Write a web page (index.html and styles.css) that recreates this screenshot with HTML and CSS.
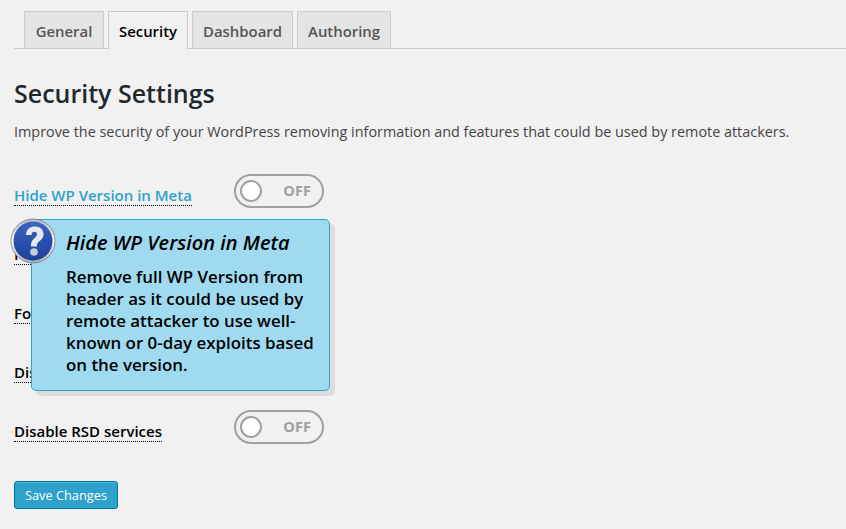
FILE: index.html
```html
<!DOCTYPE html>
<html lang="en">
<head>
<meta charset="utf-8">
<title>Security Settings</title>
<link rel="stylesheet" href="styles.css">
</head>
<body>
<nav class="tabs">
  <a class="tab">General</a>
  <a class="tab active">Security</a>
  <a class="tab">Dashboard</a>
  <a class="tab">Authoring</a>
</nav>
<h2 class="title">Security Settings</h2>
<p class="intro">Improve the security of your WordPress removing information and features that could be used by remote attackers.</p>
<div class="rows">
  <div class="row">
    <span class="label hover">Hide WP Version in Meta</span>
    <span class="switch"><i class="knob"></i><b class="off">OFF</b></span>
  </div>
  <div class="row">
    <span class="label">Hide Login Errors</span>
    <span class="switch"><i class="knob"></i><b class="off">OFF</b></span>
  </div>
  <div class="row">
    <span class="label">Force SSL</span>
    <span class="switch"><i class="knob"></i><b class="off">OFF</b></span>
  </div>
  <div class="row">
    <span class="label">Disable XML</span>
    <span class="switch"><i class="knob"></i><b class="off">OFF</b></span>
  </div>
  <div class="row">
    <span class="label">Disable RSD services</span>
    <span class="switch"><i class="knob"></i><b class="off">OFF</b></span>
  </div>
</div>
<button class="save">Save Changes</button>
<div class="tooltip">
  <h4 class="tip-title">Hide WP Version in Meta</h4>
  <p class="tip-text">Remove full WP Version from header as it could be used by remote attacker to use well-known or 0-day exploits based on the version.</p>
</div>
<svg class="help" width="46" height="46" viewBox="0 0 46 46">
  <defs>
    <linearGradient id="ring" x1="0" y1="0" x2="0" y2="1">
      <stop offset="0" stop-color="#b9bcc2"/>
      <stop offset="0.5" stop-color="#ffffff"/>
      <stop offset="1" stop-color="#a9acb2"/>
    </linearGradient>
    <linearGradient id="ball" x1="0" y1="0" x2="0" y2="1">
      <stop offset="0" stop-color="#3a66c4"/>
      <stop offset="0.55" stop-color="#2a4fa8"/>
      <stop offset="1" stop-color="#16307e"/>
    </linearGradient>
  </defs>
  <circle cx="23" cy="23" r="22" fill="url(#ring)" stroke="#777b84" stroke-width="0.8"/>
  <circle cx="23" cy="23" r="19.5" fill="url(#ball)"/>
  <path d="M4 28 C12 19 28 24 42 19 A19.5 19.5 0 0 1 8 35 Z" fill="#2450b0" opacity="0.6"/>
  <path d="M16 17 C16 11 20.500 8.500 25 8.500 C30.500 8.500 33.500 12 33.500 16 C33.500 20 31 22 28.500 24 C27 25.200 27 26.500 27 28.500 L21 28.500 C21 25 21.300 23 23.800 20.800 C25.800 19 27 18 27 16.300 C27 14.600 25.800 13.800 24.300 13.800 C22.500 13.800 21.800 15 21.600 17 Z" fill="#e6e8ef"/>
  <circle cx="24" cy="34" r="3.800" fill="#c9cdd8"/>
</svg>
</body>
</html>
```
FILE: styles.css
```css
* { box-sizing: border-box; }
html, body { height: 100%; }
body {
  margin: 0;
  padding: 11px 0 0 14px;
  background: #f1f1f1;
  color: #222;
  font-family: "Open Sans", sans-serif;
  font-size: 14px;
  overflow: hidden;
  position: relative;
}
.tabs {
  display: flex;
  gap: 4px;
  padding-left: 10px;
  height: 38px;
  border-bottom: 1px solid #ccc;
}
.tab {
  height: 37px;
  min-width: 80px;
  padding: 0 10px;
  background: #e4e4e4;
  border: 1px solid #ccc;
  border-bottom: none;
  color: #555;
  font-size: 14.9px;
  font-weight: 600;
  line-height: 38px;
  text-align: center;
}
.tab.active {
  height: 38px;
  background: #f1f1f1;
  color: #000;
}
.title {
  margin: 27px 0 0;
  font-size: 25px;
  font-weight: 600;
  line-height: 35px;
  color: #23282d;
  height: 35px;
}
.intro {
  margin: 10px 0 0;
  font-size: 14.4px;
  line-height: 21px;
  color: #444;
}
.rows {
  margin-top: 32px;
  display: flex;
  flex-direction: column;
  gap: 25px;
}
.row {
  display: grid;
  grid-template-columns: 220px 90px;
  height: 34px;
}
.label {
  justify-self: start;
  align-self: start;
  margin-top: 11px;
  height: 21px;
  color: #000;
  font-size: 15px;
  font-weight: 600;
  line-height: 20px;
  white-space: nowrap;
  border-bottom: 1px dotted #000;
}
.label.hover { color: #2ea2cc; }
.switch {
  height: 34px;
  border: 2px solid #a0a0a0;
  border-radius: 17px;
  background: #f1f1f1;
  display: flex;
  align-items: center;
  justify-content: space-between;
  padding: 0 11px 0 4px;
}
.knob {
  width: 22px;
  height: 22px;
  border: 2px solid #a0a0a0;
  border-radius: 50%;
  background: #fff;
}
.off {
  color: #a0a0a0;
  font-size: 14.6px;
  font-weight: 700;
  line-height: 16px;
  margin-top: -3px;
}
.save {
  display: block;
  margin-top: 37px;
  width: 104px;
  height: 28px;
  padding: 0;
  background: #2ea2cc;
  border: 1px solid #0074a2;
  border-radius: 3px;
  box-shadow: inset 0 1px 0 rgba(120, 200, 230, 0.5);
  color: #fff;
  font-family: "Open Sans", sans-serif;
  font-size: 12.8px;
}
.tooltip {
  position: absolute;
  left: 31px;
  top: 219px;
  width: 299px;
  height: 172px;
  padding: 9px 14px 0 34px;
  background: #a0daf0;
  border: 1px solid #2ea2cc;
  border-radius: 5px;
  box-shadow: 5px 5px 0 #dddddd;
  color: #000;
}
.tip-title {
  margin: 0;
  font-size: 20px;
  font-style: italic;
  font-weight: 600;
  line-height: 28px;
}
.tip-text {
  margin: 9px 0 0;
  font-size: 16.9px;
  font-weight: 600;
  line-height: 22px;
}
.help {
  position: absolute;
  left: 10px;
  top: 218px;
}
```
